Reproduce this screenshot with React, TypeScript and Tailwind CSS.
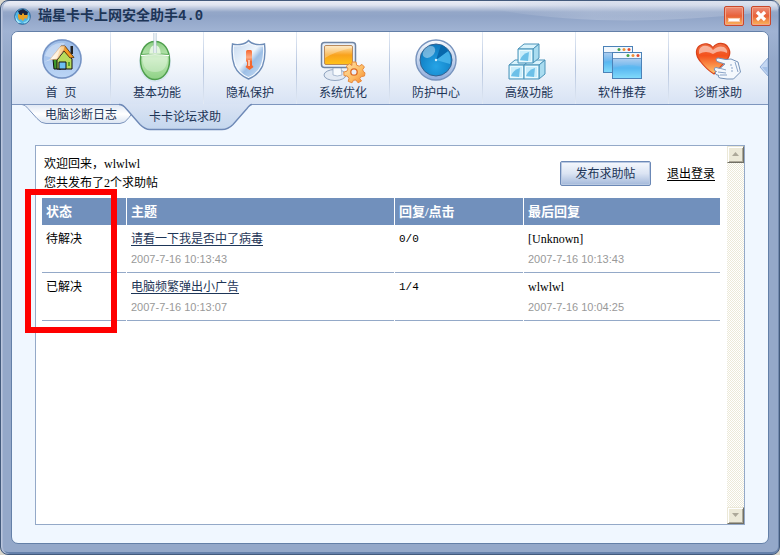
import { useState } from "react";
import type { ReactNode } from "react";

type Post = {
  state: string;
  title: string;
  created: string;
  counts: string;
  lastUser: string;
  lastTime: string;
};

const posts: Post[] = [
  {
    state: "待解决",
    title: "请看一下我是否中了病毒",
    created: "2007-7-16 10:13:43",
    counts: "0/0",
    lastUser: "[Unknown]",
    lastTime: "2007-7-16 10:13:43",
  },
  {
    state: "已解决",
    title: "电脑频繁弹出小广告",
    created: "2007-7-16 10:13:07",
    counts: "1/4",
    lastUser: "wlwlwl",
    lastTime: "2007-7-16 10:04:25",
  },
];

function Icon({ children }: { children: ReactNode }) {
  return (
    <svg
      width="48"
      height="48"
      viewBox="0 0 48 48"
      className="shrink-0 overflow-visible"
      aria-hidden="true"
    >
      {children}
    </svg>
  );
}

function HomeIcon() {
  return (
    <Icon>
      <defs>
        <linearGradient id="homeBg" x1="0" y1="0" x2="0" y2="1">
          <stop offset="0" stopColor="#9dbde8" />
          <stop offset="0.5" stopColor="#a9c6ee" />
          <stop offset="1" stopColor="#bcd6f6" />
        </linearGradient>
        <linearGradient id="roof" x1="0" y1="0" x2="1" y2="0">
          <stop offset="0" stopColor="#fffaf0" />
          <stop offset="1" stopColor="#fbc77c" />
        </linearGradient>
      </defs>
      <circle cx="25" cy="23" r="20" fill="#c3d3ec" />
      <circle cx="25" cy="23" r="19" fill="url(#homeBg)" stroke="#7391c2" strokeWidth="1.4" />
      <path d="M8 20a17 17 0 0 1 20-13l-12 15z" fill="#fff" opacity="0.35" />
      <path d="M33.500 10h2.500v8h-2.500z" fill="#222" />
      <path d="M16 23h8v10h-7z" fill="#3f9a2c" stroke="#111" />
      <path d="M20 24l7-9 8 8v10H20z" fill="#b8dc5c" stroke="#111" />
      <path d="M22 26h7v7h-7z" fill="#6cc0f2" stroke="#111" />
      <path d="M31 26h2v4h-2z" fill="#5ba530" />
      <path d="M24 10h4l9 11.500-4 .500-6-7-5 1z" fill="#f39a22" stroke="#4a2a08" strokeWidth="0.800" />
      <path d="M13 23.500L24 10h4l-1 4-7 9.500z" fill="url(#roof)" stroke="#c98f52" strokeWidth="0.600" />
      <path d="M7 26l6-3L24 10l-4 12z" fill="#fff" opacity="0.5" />
    </Icon>
  );
}

function MouseIcon() {
  return (
    <Icon>
      <defs>
        <linearGradient id="mouseBody" x1="0" y1="0" x2="0" y2="1">
          <stop offset="0" stopColor="#8dcf85" />
          <stop offset="0.45" stopColor="#bfe8b6" />
          <stop offset="1" stopColor="#8dd184" />
        </linearGradient>
      </defs>
      <ellipse cx="22" cy="26" rx="16" ry="20" fill="#d9e6f2" />
      <path
        d="M22 5.500c9 0 14.500 8 14.500 19S30 43.500 22 43.500 7.500 35 7.500 24.500 13 5.500 22 5.500z"
        fill="url(#mouseBody)"
        stroke="#4f9f4d"
        strokeWidth="1.5"
      />
      <path d="M9.500 21c3-2 22-2 25 0 0 10-4 15-12.500 15S9.500 31 9.500 21z" fill="#fff" opacity="0.3" />
      <path d="M8 19.500q14-2 28 0" fill="none" stroke="#fff" strokeWidth="1.5" />
      <path d="M8 18.500q14-2 28 0" fill="none" stroke="#5fae5b" />
      <path d="M16 18c0-5 2-9 6-9s6 4 6 9z" fill="#e3f6de" stroke="#9ad093" strokeWidth="0.600" />
      <path d="M22-3v20" stroke="#a8bfd0" strokeWidth="3" />
      <path d="M22-3v20" stroke="#fff" strokeWidth="1.400" />
    </Icon>
  );
}

function ShieldIcon() {
  return (
    <Icon>
      <defs>
        <linearGradient id="shieldFill" x1="0" y1="0" x2="1" y2="1">
          <stop offset="0" stopColor="#c9dbf1" />
          <stop offset="0.45" stopColor="#eef5fc" />
          <stop offset="0.6" stopColor="#9dbfe6" />
          <stop offset="1" stopColor="#c9def5" />
        </linearGradient>
        <linearGradient id="alertFill" x1="0" y1="0" x2="0" y2="1">
          <stop offset="0" stopColor="#f8662e" />
          <stop offset="0.6" stopColor="#fbab85" />
          <stop offset="1" stopColor="#f4672f" />
        </linearGradient>
      </defs>
      <path
        d="M22.500 4.500q3 3.500 8.500 4 4 .5 7.500-.5 1.500 13-2 22-4 9-14 13-10-4-14-13-3.500-9-2-22 3.500 1 7.500.5 5.500-.5 8.500-4z"
        fill="#f5f9fe"
        stroke="#6e8db8"
        strokeWidth="1.400"
      />
      <path
        d="M22.500 7.500q4 3 14.500 3 .5 11.500-2.500 19-3 7.500-12 11.500-9-4-12-11.500-3-7.500-2.500-19 10.500 0 14.500-3z"
        fill="url(#shieldFill)"
      />
      <rect x="20" y="14" width="6" height="12" rx="1.500" fill="url(#alertFill)" />
      <path d="M21 25h5v4l1.500 2-4 3-4-3 1.500-2z" fill="#f4672f" />
      <path d="M23 24v6" stroke="#fde0d0" strokeWidth="1.500" />
    </Icon>
  );
}

function SystemIcon() {
  return (
    <Icon>
      <defs>
        <linearGradient id="screenFill" x1="0" y1="0" x2="0" y2="1">
          <stop offset="0" stopColor="#fde4b8" />
          <stop offset="0.5" stopColor="#f9a21c" />
          <stop offset="1" stopColor="#ffc21a" />
        </linearGradient>
        <linearGradient id="gearFill" x1="0" y1="0" x2="1" y2="1">
          <stop offset="0" stopColor="#ffe4ac" />
          <stop offset="0.600" stopColor="#fcbb62" />
          <stop offset="1" stopColor="#f4822a" />
        </linearGradient>
      </defs>
      <ellipse cx="16" cy="39" rx="11" ry="5.500" fill="#e3eaf4" stroke="#8fa3bf" />
      <path d="M14 31h8l1 8q-5 2-9 0z" fill="#f7fafd" stroke="#9aadc8" strokeWidth="0.800" />
      <rect x="2.500" y="6.500" width="34" height="25" rx="3" fill="#e9f0f9" stroke="#6f84a3" strokeWidth="1.500" />
      <rect x="5.500" y="9.500" width="28" height="19" rx="1.500" fill="url(#screenFill)" stroke="#b98a5c" />
      <path d="M6 22q11-7 27-10v-2H6z" fill="#fff" opacity="0.3" />
      <g transform="translate(35 36)">
        <path
          d="M-2-10h4l.7 3.200 2.500 1 2.800-1.800 2.400 2.600-1.800 2.800 1 2L11 .8 10.500 4l-3.200.6-1.500 2L7.500 9 4 10.800 2 8l-2.500.2-1.500 2.600-3.800-1.500.8-3-1.800-2.300-3.200-.3-.2-3.600 3.200-1 1-2.200-1.700-2.700 3-2.500 2.600 1.800z"
          fill="url(#gearFill)"
          stroke="#e88a3c"
          strokeLinejoin="round"
        />
        <circle r="3.200" fill="#e9eef8" stroke="#df6a22" strokeWidth="1.300" />
      </g>
    </Icon>
  );
}

function RadarIcon() {
  return (
    <Icon>
      <defs>
        <linearGradient id="ring" x1="0" y1="0" x2="0" y2="1">
          <stop offset="0" stopColor="#f7fafd" />
          <stop offset="1" stopColor="#8facdc" />
        </linearGradient>
        <radialGradient id="radarFill" cx="0.500" cy="0.700" r="0.700">
          <stop offset="0" stopColor="#26a4e6" />
          <stop offset="1" stopColor="#0b77bd" />
        </radialGradient>
      </defs>
      <circle cx="24" cy="24" r="20" fill="url(#ring)" stroke="#7793bd" strokeWidth="1.400" />
      <circle cx="24" cy="24" r="16" fill="url(#radarFill)" stroke="#34618f" />
      <path d="M24 24l12-9q4 6 2 13z" fill="#4fb9ee" opacity="0.800" />
      <path d="M24 24l5-15q4 1 7 6z" fill="#0868ac" />
      <ellipse cx="17" cy="16" rx="7" ry="5" transform="rotate(-40 17 16)" fill="#fff" opacity="0.400" />
      <circle cx="24" cy="24" r="1.200" fill="#d8f2ff" />
    </Icon>
  );
}

function Cube({ x, y }: { x: number; y: number }) {
  return (
    <g transform={`translate(${x} ${y})`} stroke="#4b93b8" strokeLinejoin="round">
      <path d="M0 5l6-5h15l-6 5z" fill="#d9f3fc" />
      <path d="M15 5l6-5v14l-6 5z" fill="#a9dcf0" />
      <path d="M0 5h15v14H0z" fill="#c9edfb" />
      <path d="M2 16q2-6 9-8l-1 9z" fill="#6cc0e8" stroke="none" />
      <path d="M1.500 6.500h12v11h-12z" fill="none" stroke="#f4fcff" strokeWidth="0.800" />
    </g>
  );
}

function CubesIcon() {
  return (
    <Icon>
      <Cube x={4} y={24} />
      <Cube x={19} y={24} />
      <Cube x={13} y={8} />
    </Icon>
  );
}

function MiniWindow({ x, y }: { x: number; y: number }) {
  return (
    <g transform={`translate(${x} ${y})`}>
      <rect x="0.500" y="0.500" width="29" height="26" fill="url(#winFill)" stroke="#4b82b8" />
      <rect x="1" y="1" width="28" height="5" fill="#f3f8fd" />
      <path d="M1 6.500h28" stroke="#6b97c4" />
      <path d="M1 17q13-7 28-2v11H1z" fill="#4bbcf4" opacity="0.400" />
      <circle cx="16" cy="3.500" r="1.500" fill="#45a54a" />
      <circle cx="21" cy="3.500" r="1.500" fill="#ef9136" />
      <circle cx="26" cy="3.500" r="1.500" fill="#e04c30" />
    </g>
  );
}

function WindowsIcon() {
  return (
    <Icon>
      <defs>
        <linearGradient id="winFill" x1="0" y1="0" x2="0" y2="1">
          <stop offset="0.200" stopColor="#b5d0f0" />
          <stop offset="0.600" stopColor="#62b4ee" />
          <stop offset="1" stopColor="#a6f0ff" />
        </linearGradient>
      </defs>
      <MiniWindow x={5} y={10} />
      <MiniWindow x={14} y={16} />
    </Icon>
  );
}

function HeartIcon() {
  return (
    <Icon>
      <defs>
        <linearGradient id="heartFill" x1="0" y1="0" x2="0" y2="1">
          <stop offset="0" stopColor="#ee7046" />
          <stop offset="0.400" stopColor="#f4511c" />
          <stop offset="1" stopColor="#ffc870" />
        </linearGradient>
      </defs>
      <path
        d="M19 11.500C23 6 30 6.500 33.500 10.500c4 5 2 11-3 16L20 38Q13 34 6 25C1 19 1.500 12.500 6 9.500c4.500-3 10-2 13 2z"
        fill="url(#heartFill)"
        stroke="#d9431c"
        strokeWidth="1.200"
      />
      <path d="M5 18q-1-6 4-8 6-1 10 4 5-5 11-3 4 3 3 6-7-4-14 1-7-4-14 0z" fill="#fff" opacity="0.500" />
      <path
        d="M31 28l-8-2.500q-2-3 1-3.500l8 1.500 5-.500 7 3 2.500 10-7 7H33l-7-1q-3-1-1-2.500l-3-1q-2-2 .5-3l-2-1q-1-3 1.500-3l4 1z"
        fill="#f4f8fd"
        stroke="#7592b8"
        strokeLinejoin="round"
      />
      <path
        d="M25 32l7 2M24 36l8 1M26 39l7 0M41 26l3 10M36 29l2 0M37 32l2 0M37 35l2 0"
        stroke="#8aa4c8"
        fill="none"
      />
    </Icon>
  );
}

const tools = [
  { name: "首 页", icon: <HomeIcon /> },
  { name: "基本功能", icon: <MouseIcon /> },
  { name: "隐私保护", icon: <ShieldIcon /> },
  { name: "系统优化", icon: <SystemIcon /> },
  { name: "防护中心", icon: <RadarIcon /> },
  { name: "高级功能", icon: <CubesIcon /> },
  { name: "软件推荐", icon: <WindowsIcon /> },
  { name: "诊断求助", icon: <HeartIcon /> },
];

function TitleBar() {
  return (
    <header className="relative flex h-[30px] items-center pl-[13px] pr-[8px]">
      <svg
        className="absolute top-0 right-0 h-[30px] w-[310px]"
        viewBox="0 0 310 30"
        preserveAspectRatio="none"
        aria-hidden="true"
      >
        <defs>
          <linearGradient id="swoosh" x1="0" y1="0" x2="1" y2="0">
            <stop offset="0" stopColor="#c5cfe2" stopOpacity="0" />
            <stop offset="0.4" stopColor="#c5cfe2" stopOpacity="0.4" />
            <stop offset="1" stopColor="#c5cfe2" stopOpacity="0.3" />
          </linearGradient>
        </defs>
        <path d="M0 3Q80 22 190 19 270 16 310 8V0H0z" fill="url(#swoosh)" />
      </svg>
      <svg width="17" height="17" viewBox="0 0 17 17" aria-hidden="true">
        <circle cx="8.500" cy="8.500" r="7.800" fill="#4fb4e4" stroke="#235a90" strokeWidth="0.900" />
        <path d="M1.500 7q1 6 6 7.500L4 15Q1 12 1.500 7z" fill="#a8e9fa" />
        <path d="M9 14q5 0 6-6l.500 3q-2 4-5 4.500z" fill="#8edcf2" />
        <path d="M4 3l5-2 5 3-1 4H6z" fill="#1a2440" />
        <path d="M4 6l3 1 2-2 2 2 3 0-1 4-2-1-2 3-2-2-2 1-1-3z" fill="#e8a224" />
        <path d="M7 6h1v1H7zM10 6h1v1h-1z" fill="#16243c" />
      </svg>
      <h1 className="relative ml-[7px] flex-1 font-['Liberation_Mono','Noto_Sans_CJK_SC',monospace] text-[14px] leading-5 font-bold text-[#1d3557]">
        瑞星卡卡上网安全助手4.0
      </h1>
      <div className="relative flex gap-[7px]">
        <button
          aria-label="最小化"
          className="flex size-5 items-end justify-center rounded-[2px] border border-[#c9472b] bg-linear-to-b from-[#eb8d78] via-[#e86038] to-[#f9b75c] pb-[3px] shadow-[inset_0_0_0_1px_#f2a58a]"
        >
          <span className="h-1 w-3 border border-[#f8cdb4] bg-white" />
        </button>
        <button
          aria-label="关闭"
          className="flex size-5 items-center justify-center rounded-[2px] border border-[#c9472b] bg-linear-to-b from-[#eb8d78] via-[#e86038] to-[#f9b75c] shadow-[inset_0_0_0_1px_#f2a58a]"
        >
          <svg width="12" height="12" viewBox="0 0 12 12" aria-hidden="true">
            <path d="M2 2l8 8M10 2l-8 8" stroke="#fff" strokeWidth="3.200" />
          </svg>
        </button>
      </div>
    </header>
  );
}

function Toolbar() {
  return (
    <nav className="relative rounded-t-[6px] border-b border-[#7e96be] bg-linear-to-b from-white from-20% to-[#d8e3f4]">
      <div className="flex h-[72px]">
        {tools.map((tool) => (
          <button
            key={tool.name}
            className="flex w-[93px] flex-col items-center border-r border-transparent pt-1 font-['Liberation_Mono','Noto_Sans_CJK_SC',monospace] text-[12px] leading-5 text-[#1d3557] [border-image:linear-gradient(to_bottom,#e4ebf5,#b4c4de_50%,#e4ebf5)_1] first:flex-1 last:flex-1 last:[border-image:none]"
          >
            {tool.icon}
            <span className="whitespace-pre">{tool.name}</span>
          </button>
        ))}
      </div>
      <svg
        className="absolute top-[25px] right-0"
        width="9"
        height="20"
        viewBox="0 0 9 20"
        aria-hidden="true"
      >
        <path d="M9 1L1 10l8 9z" fill="#c3d6f1" stroke="#93aed8" />
        <path d="M9 10H3l6 7z" fill="#a3bfe6" />
      </svg>
    </nav>
  );
}

function Tabs() {
  const [active, setActive] = useState(1);
  return (
    <div role="tablist" className="flex items-start pl-[10px] text-[12px] text-[#1d3557]">
      <button
        role="tab"
        aria-selected={active === 0}
        onClick={() => setActive(0)}
        className="relative h-5 w-[110px] pl-2 leading-5"
      >
        <svg className="absolute top-0 left-0 overflow-visible" width="110" height="20" aria-hidden="true">
          <defs>
            <linearGradient id="tabIdle" x1="0" y1="0" x2="0" y2="1">
              <stop offset="0" stopColor="#dfe7f4" />
              <stop offset="0.500" stopColor="#fff" />
              <stop offset="1" stopColor="#dae4f2" />
            </linearGradient>
          </defs>
          <path
            d="M0-.5q3 0 6 4l9 10q4 5 9 5h74q5 0 9-6l3-4-10-9z"
            fill="url(#tabIdle)"
            stroke="#7e96be"
          />
        </svg>
        <span className="relative">电脑诊断日志</span>
      </button>
      <button
        role="tab"
        aria-selected={active === 1}
        onClick={() => setActive(1)}
        className="relative -ml-3 h-6 w-[130px] leading-6"
      >
        <svg className="absolute top-0 left-0 overflow-visible" width="130" height="25" aria-hidden="true">
          <defs>
            <linearGradient id="tabOn" x1="0" y1="0" x2="0" y2="1">
              <stop offset="0" stopColor="#dae4f4" />
              <stop offset="1" stopColor="#c5d7ee" />
            </linearGradient>
          </defs>
          <path d="M-1-1q4 0 7 4l14 16q5 5 10 5h72q6 0 11-5l14-16q3-4 5-4z" fill="url(#tabOn)" />
          <path
            d="M-1-.5q4 0 7 4l14 16q5 5 10 5h72q6 0 11-5l14-16q3-4 5-4"
            fill="none"
            stroke="#6d88b6"
            strokeWidth="1.400"
          />
        </svg>
        <span className="relative">卡卡论坛求助</span>
      </button>
    </div>
  );
}

function ScrollButton({ down = false }: { down?: boolean }) {
  return (
    <button
      aria-label={down ? "向下滚动" : "向上滚动"}
      className="flex size-[17px] items-center justify-center border border-t-[#ece9d8] border-r-[#716f64] border-b-[#716f64] border-l-[#ece9d8] bg-[#ece9d8] shadow-[inset_1px_1px_0_#fff,inset_-1px_-1px_0_#aca899]"
    >
      <svg width="8" height="5" viewBox="0 0 8 5" aria-hidden="true">
        <path d={down ? "M0 0h7L3.500 4z" : "M0 4h7L3.500 0z"} fill="#aca899" />
      </svg>
    </button>
  );
}

function PostTable() {
  return (
    <table className="w-full table-fixed border-separate border-spacing-x-px border-spacing-y-0 text-left text-[12px]">
      <colgroup>
        <col className="w-[84px]" />
        <col />
        <col className="w-[128px]" />
        <col className="w-[196px]" />
      </colgroup>
      <thead>
        <tr className="h-[27px] bg-[#7190bc] text-[13px] leading-5 text-white">
          <th className="px-1 py-0">状态</th>
          <th className="px-1 py-0">主题</th>
          <th className="px-1 py-0">回复/点击</th>
          <th className="px-1 py-0">最后回复</th>
        </tr>
      </thead>
      <tbody>
        {posts.map((post) => (
          <tr key={post.title} className="align-top leading-5">
            <td className="border-b border-[#94a9c8] px-1 pt-1 pb-[3px]">{post.state}</td>
            <td className="border-b border-[#94a9c8] px-1 pt-1 pb-[3px]">
              <a href="#" className="block text-[#1d3557] underline underline-offset-2">
                {post.title}
              </a>
              <time className="block font-['Liberation_Sans',sans-serif] text-[11px] leading-5 text-[#999]">
                {post.created}
              </time>
            </td>
            <td className="border-b border-[#94a9c8] px-1 pt-1 pb-[3px]">
              <span className="block font-['Liberation_Mono',monospace] text-[11px] leading-5">
                {post.counts}
              </span>
            </td>
            <td className="border-b border-[#94a9c8] px-1 pt-1 pb-[3px]">
              <span className="block">{post.lastUser}</span>
              <time className="block font-['Liberation_Sans',sans-serif] text-[11px] leading-5 text-[#999]">
                {post.lastTime}
              </time>
            </td>
          </tr>
        ))}
      </tbody>
    </table>
  );
}

export default function App() {
  return (
    <div className="flex min-h-screen flex-col bg-[#dcd8cc] font-['Liberation_Serif','Noto_Sans_CJK_SC',serif]">
      <div className="flex flex-1 flex-col rounded-[8px] border border-[#435a7c] bg-[#94a8c9] bg-[linear-gradient(to_bottom,#e9ecf5_0,#dfe4f0_4px,#94a7c8_11px,#90a4c7_15px,#a0b3d3_30px,#94a8c9_60px)] px-[10px] pb-[10px] shadow-[inset_1px_0_0_#b9c5dc,inset_2px_0_0_#a9b7d3,inset_-1px_0_0_#7189ae,inset_0_-2px_0_#6580aa]">
        <div className="-mx-[10px]">
          <TitleBar />
        </div>

        <div className="flex flex-1 flex-col rounded-[7px] border border-[#6480a8] bg-[#f0f7ff]">
          <Toolbar />
          <Tabs />

          {/* Forum page */}
          <main className="mx-[23px] mt-[16px] mb-[18px] flex flex-1 border border-[#94a9c8] bg-white">
            <div className="relative min-w-0 flex-1 pt-[9px] pr-[6px] pl-[5px]">
              <div className="mb-[5px] flex items-start justify-between pr-[6px] pl-[3px]">
                <div className="text-[12px] leading-[19px]">
                  <p>欢迎回来，wlwlwl</p>
                  <p>您共发布了2个求助帖</p>
                </div>
                <div className="flex items-center gap-4 pt-[6px] text-[12px]">
                  <button className="h-[25px] w-[91px] rounded-[2px] border border-[#6b88b6] bg-linear-to-b from-[#f5f8fd] via-[#dbe4f3] to-[#a3b8da] text-[#1d3557] shadow-[inset_0_0_0_1px_#b9c9e2]">
                    发布求助帖
                  </button>
                  <a href="#" className="text-black underline underline-offset-2">
                    退出登录
                  </a>
                </div>
              </div>

              <PostTable />

              {/* Highlight around the status column */}
              <div className="pointer-events-none absolute top-[43px] -left-[11px] h-36 w-[92px] border-[6px] border-[#f00]" />
            </div>

            {/* Scrollbar */}
            <div className="flex w-[17px] flex-col justify-between bg-[repeating-conic-gradient(#ece9d8_0_25%,#fff_0_50%)] bg-size-[2px_2px]">
              <ScrollButton />
              <ScrollButton down />
            </div>
          </main>
        </div>
      </div>
    </div>
  );
}
